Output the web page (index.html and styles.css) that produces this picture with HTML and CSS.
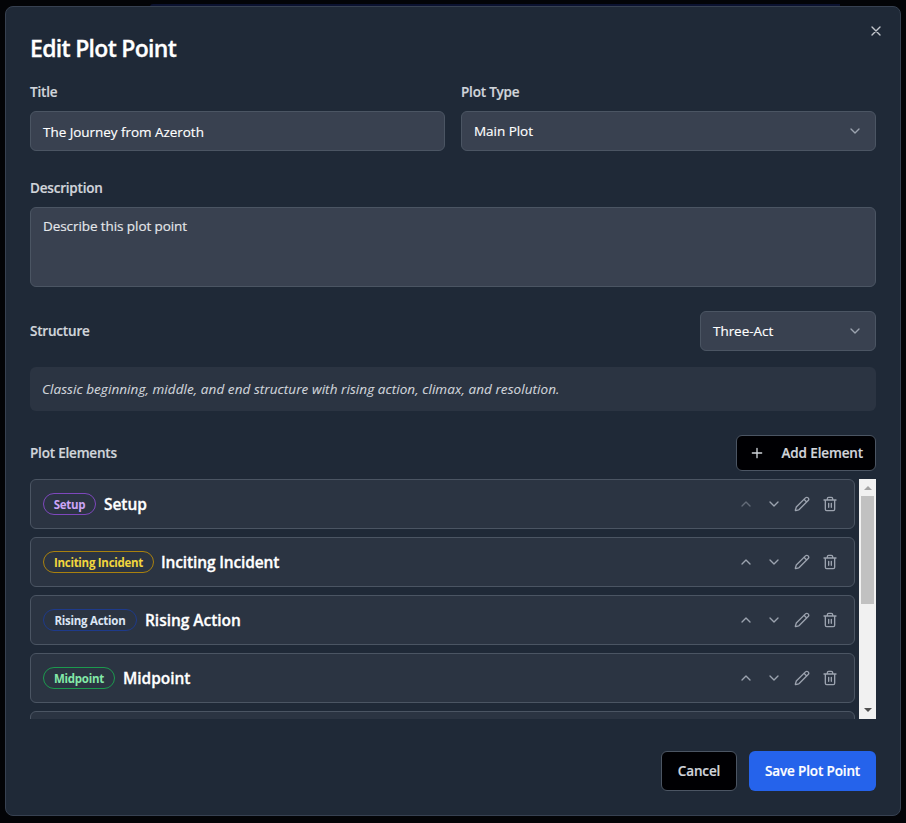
FILE: index.html
```
<!DOCTYPE html>
<html lang="en">
<head>
<meta charset="utf-8">
<title>Edit Plot Point</title>
<link rel="stylesheet" href="styles.css">
</head>
<body>
<svg class="defs" aria-hidden="true">
  <symbol id="up" viewBox="0 0 24 24"><path d="m18 15-6-6-6 6"/></symbol>
  <symbol id="down" viewBox="0 0 24 24"><path d="m6 9 6 6 6-6"/></symbol>
  <symbol id="pencil" viewBox="0 0 24 24"><path d="M21.2 6.8a1 1 0 0 0-4-4L3.8 16.2a2 2 0 0 0-.5.8L2 21.4a.5.5 0 0 0 .6.6l4.4-1.3a2 2 0 0 0 .8-.5zM15 5l4 4"/></symbol>
  <symbol id="trash" viewBox="0 0 24 24"><path d="M3 6h18M19 6v14c0 1-1 2-2 2H7c-1 0-2-1-2-2V6M8 6V4c0-1 1-2 2-2h4c1 0 2 1 2 2v2M10 11v6M14 11v6"/></symbol>
  <symbol id="plus" viewBox="0 0 24 24"><path d="M5 12h14M12 5v14"/></symbol>
  <symbol id="close" viewBox="0 0 24 24"><path d="M18 6 6 18M6 6l12 12"/></symbol>
</svg>
<div class="backdrop"></div>
<main class="dialog">
  <button class="close" aria-label="Close"><svg class="icon"><use href="#close"/></svg></button>
  <h2 class="heading"><span>Edit Plot Point</span></h2>
  <div class="columns">
    <div class="field"><span class="label">Title</span><div class="control text-input"><span>The Journey from Azeroth</span></div></div>
    <div class="field"><span class="label">Plot Type</span><div class="control"><span>Main Plot</span><svg class="icon chevron"><use href="#down"/></svg></div></div>
  </div>
  <div class="field description"><span class="label">Description</span><div class="control area"><span>Describe this plot point</span></div></div>
  <div class="row structure"><span class="label">Structure</span><div class="control select"><span>Three-Act</span><svg class="icon chevron"><use href="#down"/></svg></div></div>
  <div class="note"><span>Classic beginning, middle, and end structure with rising action, climax, and resolution.</span></div>
  <div class="row elements"><span class="label">Plot Elements</span><button class="button dark add"><svg class="icon"><use href="#plus"/></svg><span>Add Element</span></button></div>
  <div class="scroller">
    <div class="list">
      <div class="item"><span class="badge purple">Setup</span><span class="name">Setup</span><div class="actions"><svg class="icon dim"><use href="#up"/></svg><svg class="icon"><use href="#down"/></svg><svg class="icon"><use href="#pencil"/></svg><svg class="icon"><use href="#trash"/></svg></div></div>
      <div class="item"><span class="badge yellow">Inciting Incident</span><span class="name incident">Inciting Incident</span><div class="actions"><svg class="icon"><use href="#up"/></svg><svg class="icon"><use href="#down"/></svg><svg class="icon"><use href="#pencil"/></svg><svg class="icon"><use href="#trash"/></svg></div></div>
      <div class="item"><span class="badge blue">Rising Action</span><span class="name">Rising Action</span><div class="actions"><svg class="icon"><use href="#up"/></svg><svg class="icon"><use href="#down"/></svg><svg class="icon"><use href="#pencil"/></svg><svg class="icon"><use href="#trash"/></svg></div></div>
      <div class="item"><span class="badge green">Midpoint</span><span class="name">Midpoint</span><div class="actions"><svg class="icon"><use href="#up"/></svg><svg class="icon"><use href="#down"/></svg><svg class="icon"><use href="#pencil"/></svg><svg class="icon"><use href="#trash"/></svg></div></div>
      <div class="item"></div>
    </div>
    <div class="scrollbar"><i class="arrow arrow-up"></i><i class="thumb"></i><i class="arrow arrow-down"></i></div>
  </div>
  <div class="footer"><button class="button dark cancel">Cancel</button><button class="button save">Save Plot Point</button></div>
</main>
</body>
</html>
```
FILE: styles.css
```
* { box-sizing: border-box; }
body { margin: 0; height: 823px; padding: 6px 5px 7px; overflow: hidden; background: #030407; font: 13.5px/20px "Open Sans", "Noto Sans", sans-serif; color: #fff; }
.defs { position: absolute; width: 0; height: 0; }
.backdrop { position: absolute; top: 4px; left: 150px; width: 690px; height: 8px; border-radius: 3px 0 0 0; background: #0b1230; }
.dialog { position: relative; display: flex; flex-direction: column; width: 896px; height: 810px; padding: 24px; border: 1px solid #374151; border-radius: 8px; background: #1f2937; }
button { margin: 0; padding: 0; border: 0; background: none; font: inherit; color: inherit; white-space: nowrap; }
span { white-space: nowrap; }
.icon { display: block; flex: none; width: 16px; height: 16px; fill: none; stroke: currentColor; stroke-width: 2; stroke-linecap: round; stroke-linejoin: round; }
.close { position: absolute; top: 16px; right: 16px; color: #c3c7cd; }
.heading { margin: 0; height: 36px; font-size: 23px; line-height: 34px; font-weight: 600; letter-spacing: -.7px; -webkit-text-stroke: .3px; }
.columns { display: grid; grid-template-columns: 1fr 1fr; gap: 16px; margin-top: 15px; }
.field { display: flex; flex-direction: column; gap: 9px; }
.label { font-weight: 600; color: #d1d5db; letter-spacing: -.2px; -webkit-text-stroke: .2px; }
.control { display: flex; align-items: center; justify-content: space-between; height: 40px; padding: 0 12px; border: 1px solid #4b5563; border-radius: 6px; background: #394150; letter-spacing: -.04px; -webkit-text-stroke: .15px; }
.text-input { padding-top: 1px; }
.chevron { color: #9ca3af; }
.description { margin-top: 27px; }
.area { align-items: flex-start; height: 80px; padding-top: 8px; color: #e5e7eb; letter-spacing: -.08px; }
.row { display: flex; align-items: center; justify-content: space-between; }
.structure { margin-top: 24px; }
.select { width: 176px; }
.note { height: 44px; margin-top: 16px; padding: 12px; border-radius: 6px; background: #2b3442; color: #d1d5db; font-style: italic; letter-spacing: .07px; -webkit-text-stroke: .1px; }
.elements { margin-top: 24px; }
.button { display: flex; align-items: center; justify-content: center; height: 40px; border-radius: 6px; font-weight: 600; letter-spacing: -.13px; -webkit-text-stroke: .2px; }
.dark { background: #000003; border: 1px solid #4b5563; color: #d1d5db; }
.add { width: 140px; height: 36px; justify-content: space-between; padding: 0 12px; }
.scroller { display: flex; gap: 4px; height: 240px; margin-top: 8px; overflow: hidden; }
.list { display: flex; flex: 1; flex-direction: column; gap: 8px; }
.item { display: flex; flex: none; align-items: center; height: 50px; padding: 0 16px 0 12px; border: 1px solid #4b5563; border-radius: 6px; background: #2b3442; }
.badge { display: flex; justify-content: center; height: 22px; border: 1px solid; border-radius: 11px; font-size: 11.5px; line-height: 22px; font-weight: 700; letter-spacing: -.27px; }
.purple { width: 53px; border-color: #7e48bd; color: #cda5f6; }
.yellow { width: 111px; border-color: #a9810e; color: #f1d53e; }
.blue { width: 94px; border-color: #1e3a8a; color: #dbe5f3; }
.green { width: 72px; border-color: #1c9a4e; color: #83e8a8; }
.name { margin-left: 8px; font-size: 15.5px; font-weight: 600; letter-spacing: -.04px; -webkit-text-stroke: .3px; }
.incident { margin-left: 7px; letter-spacing: -.14px; }
.actions { display: flex; gap: 12px; margin-left: auto; color: #9ca3af; }
.dim { opacity: .5; }
.scrollbar { display: flex; flex-direction: column; align-items: center; width: 17px; height: 240px; background: #f1f1f1; }
.arrow { width: 0; height: 0; border: 4px solid transparent; }
.arrow-up { margin-top: 3px; border-bottom-color: #a3a3a3; }
.thumb { width: 13px; height: 108px; margin-top: 6px; background: #c1c1c1; }
.arrow-down { margin: auto 0 3px; border-top-color: #505050; }
.footer { display: flex; justify-content: flex-end; gap: 12px; margin-top: 32px; }
.cancel { width: 76px; }
.save { width: 127px; background: #2563eb; color: #fff; }
```
